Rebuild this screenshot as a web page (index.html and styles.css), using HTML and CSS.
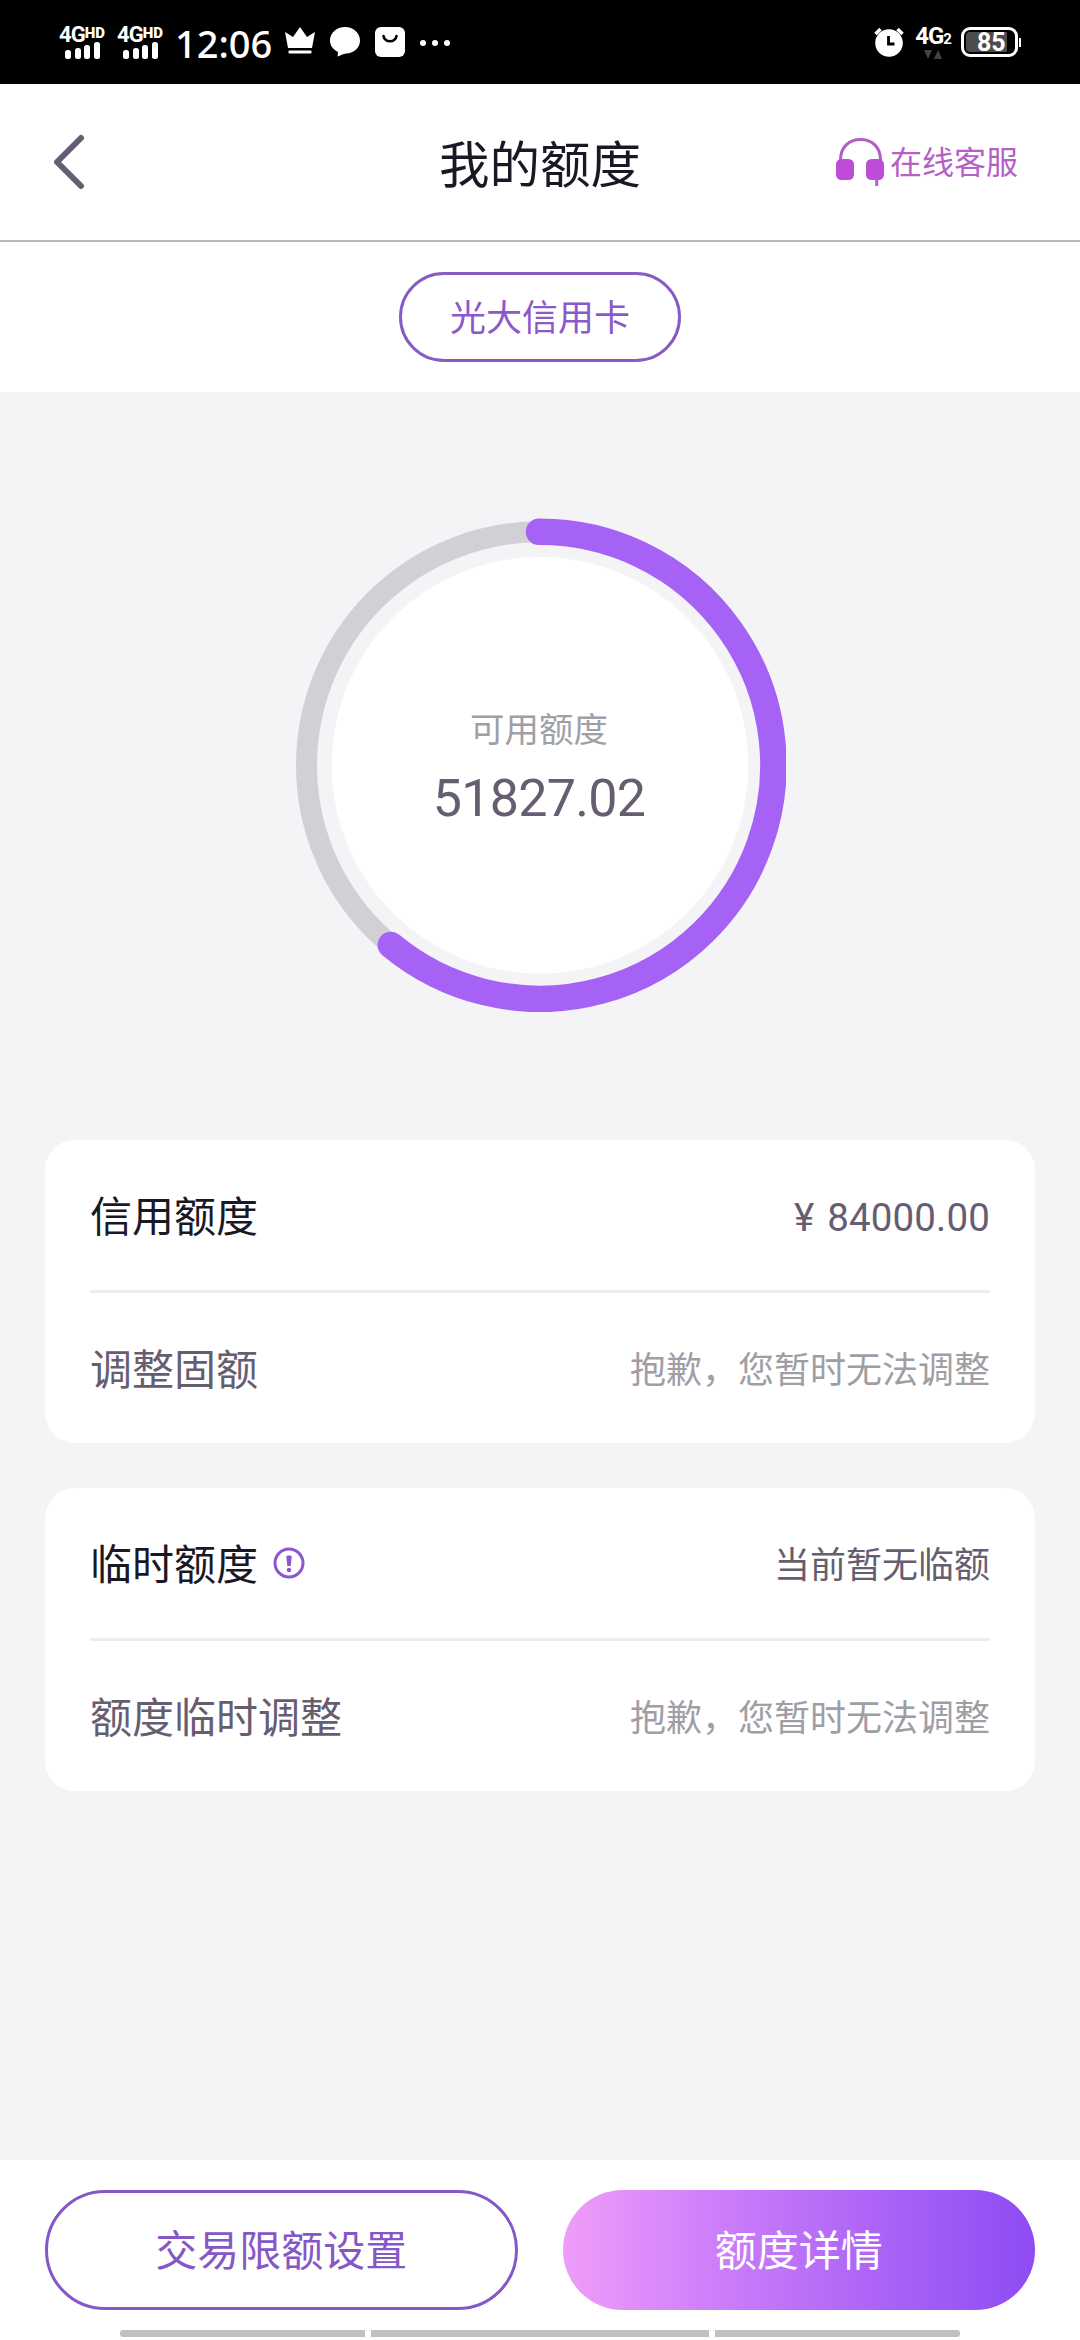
FILE: index.html
```html
<!DOCTYPE html>
<html lang="zh-CN">
<head>
<meta charset="utf-8">
<title>我的额度</title>
<link rel="stylesheet" href="styles.css">
</head>
<body>
<div class="screen">
  <div class="status">
    <div class="status-left">
      <div class="signal"><span class="net">4G<b>HD</b></span><svg width="36" height="17"><g fill="#fff"><rect x="0" y="8" width="6" height="9" rx="2.5"/><rect x="10" y="6" width="6" height="11" rx="2.5"/><rect x="19" y="3" width="6" height="14" rx="2.5"/><rect x="29" y="0" width="6" height="17" rx="2.5"/></g></svg></div>
      <div class="signal"><span class="net">4G<b>HD</b></span><svg width="36" height="17"><g fill="#fff"><rect x="0" y="8" width="6" height="9" rx="2.5"/><rect x="10" y="6" width="6" height="11" rx="2.5"/><rect x="19" y="3" width="6" height="14" rx="2.5"/><rect x="29" y="0" width="6" height="17" rx="2.5"/></g></svg></div>
      <span class="clock">12:06</span>
      <svg class="crown" width="30" height="28" viewBox="0 0 30 28" fill="#fff"><path d="M0 5L8 10 15 0 22 10 30 5 27 21H3Z"/><rect x="3.5" y="23.5" width="23" height="3" rx="1"/></svg>
      <svg class="chat" width="30" height="30" viewBox="0 0 30 30" fill="#fff"><path d="M15 0C23.500 0 30 6 30 13.500S23.500 26.500 16 26.500C13 27 10.500 28.500 7.500 29.500L8 25C3 22.500 0 18.500 0 13.500 0 6 6.500 0 15 0Z"/></svg>
      <svg class="bag" width="30" height="30" viewBox="0 0 30 30"><rect width="30" height="30" rx="6" fill="#fff"/><path d="M8.500 9C9.500 16 20.500 16 21.500 9" fill="none" stroke="#000" stroke-width="2.600" stroke-linecap="round"/></svg>
      <svg class="dots" width="30" height="6" fill="#fff"><circle cx="3" cy="3" r="3"/><circle cx="15" cy="3" r="3"/><circle cx="27" cy="3" r="3"/></svg>
    </div>
    <div class="status-right">
      <svg width="30" height="30" viewBox="0 0 30 30"><circle cx="15" cy="16" r="13.800" fill="#fff"/><path d="M1.500 7L6.500 2M28.500 7L23.500 2" stroke="#fff" stroke-width="3.500"/><path d="M14.500 9V17H20.500" fill="none" stroke="#000" stroke-width="2.800"/></svg>
      <div class="data"><span class="net">4G<small>2</small></span><svg width="18" height="9" fill="#444"><path d="M0 0H8L4 9ZM10 9H18L14 0Z"/></svg></div>
      <div class="battery"><span>85</span></div>
    </div>
  </div>

  <div class="header">
    <svg class="back" width="34" height="56" viewBox="0 0 34 56"><path d="M29 4L5 28 29 52" fill="none" stroke="#665e70" stroke-width="6" stroke-linecap="round" stroke-linejoin="round"/></svg>
    <h1 class="title">我的额度</h1>
    <div class="service">
      <svg width="49" height="49" viewBox="0 0 49 49"><path d="M4.500 22C4.500 9 13 1.500 24.500 1.500S44.500 9 44.500 22" fill="none" stroke="#b45bc6" stroke-width="3"/><rect x="0" y="21" width="18" height="21" rx="5.500" fill="#bf4bd9"/><rect x="30" y="21" width="18" height="21" rx="5.500" fill="#bf4bd9"/><path d="M40.700 40V48" stroke="#b45bc6" stroke-width="3"/></svg>
      <span>在线客服</span>
    </div>
  </div>

  <div class="tabs"><span class="chip">光大信用卡</span></div>

  <div class="content">
    <div class="gauge">
      <svg class="ring" width="492" height="494" viewBox="0 0 492 494"><circle cx="246" cy="247.300" r="208.300" fill="#fff"/><circle cx="246" cy="247.300" r="233.500" fill="none" stroke="#d2d0d7" stroke-width="21"/><path d="M245 13.800A233.500 233.500 0 1 1 96.800 427" fill="none" stroke="#a661f5" stroke-width="26.500" stroke-linecap="round"/></svg>
      <div class="gauge-text"><span class="gauge-label">可用额度</span><span class="gauge-value">51827.02</span></div>
    </div>

    <div class="card">
      <div class="row"><span class="name strong">信用额度</span><span class="money">¥ 84000.00</span></div>
      <div class="row"><span class="name">调整固额</span><span class="value">抱歉，您暂时无法调整</span></div>
    </div>
    <div class="card">
      <div class="row"><span class="name strong">临时额度<svg class="info" width="32" height="32" viewBox="0 0 32 32"><circle cx="16" cy="16" r="14" fill="none" stroke="#8b57d0" stroke-width="3"/><path d="M14.400 8.500H17.600Q18.800 8.500 18.700 10L17.700 19H14.300L13.300 10Q13.200 8.500 14.400 8.500Z" fill="#8b57d0"/><circle cx="16" cy="23" r="2.200" fill="#8b57d0"/></svg></span><span class="value dark">当前暂无临额</span></div>
      <div class="row"><span class="name">额度临时调整</span><span class="value">抱歉，您暂时无法调整</span></div>
    </div>
  </div>

  <div class="footer">
    <div class="actions"><div class="btn outline">交易限额设置</div><div class="btn solid">额度详情</div></div>
    <div class="navbars"><i></i><i class="mid"></i><i></i></div>
  </div>
</div>
</body>
</html>
```
FILE: styles.css
```css
* { box-sizing: border-box; }
body { margin: 0; font-family: Roboto, "Noto Sans CJK SC", sans-serif; }
svg { display: block; flex: none; }
.screen { width: 1080px; height: 2340px; display: flex; flex-direction: column; background: #f4f4f6; overflow: hidden; }

.status { height: 84px; background: #000; color: #fff; display: flex; justify-content: space-between; padding: 0 59px 0 58px; flex: none; }
.status-left, .status-right { display: flex; align-items: flex-start; }
.signal { width: 48px; margin-right: 10px; padding-top: 26px; display: flex; flex-direction: column; align-items: center; }
.net { font-size: 22px; font-weight: 700; line-height: 16px; white-space: nowrap; letter-spacing: -1px; }
.net b { font-size: 15px; font-weight: 900; letter-spacing: 0; vertical-align: 4px; line-height: 1; }
.clock { font-family: "Noto Sans", sans-serif; font-weight: 500; font-size: 38px; line-height: 40px; width: 98px; padding-top: 23px; margin: 0 12px 0 1px; white-space: nowrap; }
.signal svg { margin-left: 2px; margin-top: -1px; }
.crown { margin-top: 27px; }
.chat { margin: 27px 0 0 15px; }
.bag { margin: 27px 0 0 15px; }
.dots { margin: 40px 0 0 15px; }
.status-right > svg { margin-top: 27px; margin-right: 12px; }
.data { width: 34px; padding-top: 27px; margin-right: 11px; display: flex; flex-direction: column; align-items: center; gap: 4px; }
.data .net { font-size: 24px; line-height: 18px; }
.data svg { margin-top: -2px; }
.data small { font-size: 15px; }
.battery { position: relative; width: 57px; height: 30px; margin-top: 27px; margin-right: 3px; border: 3px solid #fff; border-radius: 9px; padding: 2px; }
.battery span { display: block; width: 41px; height: 20px; background: #4c4c4c; border-radius: 4px 0 0 4px; font-size: 25px; font-weight: 700; line-height: 21px; padding-left: 11px; }
.battery::after { content: ""; position: absolute; right: -6px; top: 8px; width: 2px; height: 9px; background: #fff; }

.header { height: 158px; flex: none; background: #fff; border-bottom: 2px solid #b7b9b7; display: grid; grid-template-columns: 1fr auto 1fr; align-items: center; padding: 0 62px 0 52px; }
.title { margin: 0; font-size: 50.500px; font-weight: 400; line-height: 60px; color: #1b1825; padding: 7px 0 0 5px; margin-right: -5px; }
.service { display: flex; align-items: center; justify-content: flex-end; gap: 5px; color: #b65fc7; font-size: 32px; line-height: 40px; }
.service span { padding-top: 2px; }

.tabs { height: 150px; flex: none; background: #fff; display: flex; justify-content: center; align-items: center; }
.chip { width: 282px; height: 90px; border: 3px solid #875ac4; border-radius: 45px; color: #8b59cb; font-size: 36px; line-height: 88px; text-align: center; }

.content { flex: 1; padding: 126px 45px 0; display: flex; flex-direction: column; }
.gauge { width: 492px; height: 494px; margin: 0 auto 128px; display: grid; }
.ring, .gauge-text { grid-area: 1 / 1; }
.gauge-text { display: flex; flex-direction: column; align-items: center; padding: 192px 2px 0 0; z-index: 1; }
.gauge-label { font-size: 34.500px; line-height: 40px; color: #a09fa6; }
.gauge-value { font-size: 52px; line-height: 60px; margin-top: 19px; color: #665e70; letter-spacing: -.7px; }

.card { height: 303px; margin-bottom: 45px; padding: 0 45px; background: #fff; border-radius: 30px; }
.row { height: 150px; display: flex; justify-content: space-between; align-items: center; color: #665e70; padding-top: 6px; }
.row + .row { height: 153px; border-top: 3px solid #ededee; }
.name { display: flex; align-items: center; font-size: 42px; line-height: 60px; }
.strong { color: #1b1825; }
.info { margin-left: 15px; margin-top: -7px; }
.value { font-size: 36px; color: #9f9ea5; margin-top: -8px; }
.value.dark { color: #665e70; }
.money { font-size: 38.500px; letter-spacing: .15px; word-spacing: 3px; margin-top: -2px; }

.footer { height: 180px; flex: none; background: #fff; padding: 30px 45px 0; }
.actions { display: grid; grid-template-columns: 1fr 1fr; gap: 45px; }
.btn { height: 120px; border-radius: 60px; font-size: 42px; line-height: 124px; text-align: center; }
.outline { border: 3px solid #8657c6; color: #8657c6; line-height: 118px; }
.solid { color: #fff; background: linear-gradient(90deg, #ef9df9, #c97bfa 36%, #8d4bf3); }
.navbars { display: flex; justify-content: center; gap: 6px; margin-top: 20px; }
.navbars i { width: 245px; height: 7px; background: #c0c0c0; border-radius: 3px 0 0 3px; }
.navbars .mid { width: 338px; border-radius: 0; }
.navbars i:last-child { border-radius: 0 3px 3px 0; }
```
